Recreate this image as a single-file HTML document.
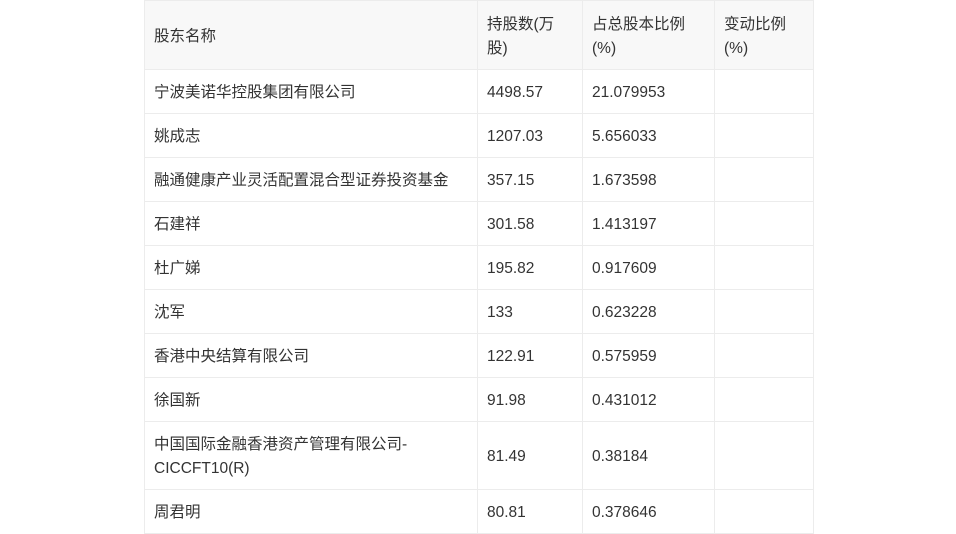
<!DOCTYPE html><html><head><meta charset="utf-8"><style>
body{margin:0;background:#fff;font-family:"Liberation Sans","Noto Sans CJK SC",sans-serif;font-size:15.5px;color:#333}
table{position:absolute;left:144px;top:0;border-collapse:collapse;table-layout:fixed;width:669px}
td{border:1px solid #ececec;padding:3px 9px 0;line-height:24px;vertical-align:middle}
tr.h td{background:#f8f8f8;height:65px}
tr td{height:40px}
tr.t td{height:64px}
</style></head><body>
<table>
<col style="width:333px"><col style="width:105px"><col style="width:132px"><col style="width:99px">
<tr class="h"><td>股东名称</td><td>持股数(万<br>股)</td><td>占总股本比例<br>(%)</td><td>变动比例<br>(%)</td></tr>
<tr><td>宁波美诺华控股集团有限公司</td><td>4498.57</td><td>21.079953</td><td></td></tr>
<tr><td>姚成志</td><td>1207.03</td><td>5.656033</td><td></td></tr>
<tr><td>融通健康产业灵活配置混合型证券投资基金</td><td>357.15</td><td>1.673598</td><td></td></tr>
<tr><td>石建祥</td><td>301.58</td><td>1.413197</td><td></td></tr>
<tr><td>杜广娣</td><td>195.82</td><td>0.917609</td><td></td></tr>
<tr><td>沈军</td><td>133</td><td>0.623228</td><td></td></tr>
<tr><td>香港中央结算有限公司</td><td>122.91</td><td>0.575959</td><td></td></tr>
<tr><td>徐国新</td><td>91.98</td><td>0.431012</td><td></td></tr>
<tr class="t"><td>中国国际金融香港资产管理有限公司-<br>CICCFT10(R)</td><td>81.49</td><td>0.38184</td><td></td></tr>
<tr><td>周君明</td><td>80.81</td><td>0.378646</td><td></td></tr>
</table>
</body></html>
